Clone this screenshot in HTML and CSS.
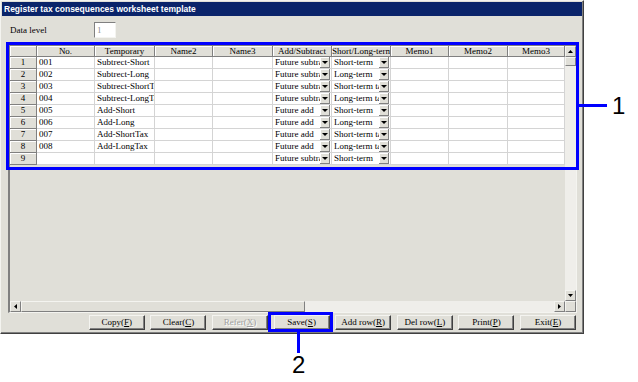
FILE: index.html
```html
<!DOCTYPE html>
<html lang="en">
<head>
    <meta charset="UTF-8">
    <title>Register tax consequences worksheet template</title>
    <link rel="stylesheet" href="styles.css">
</head>
<body>
    <div class="window">
        <div class="titlebar">Register tax consequences worksheet template</div>
        <div class="level-row">
            <span class="level-label">Data level</span>
            <div class="level-box">1</div>
        </div>
        <div class="grid-frame">
            <div class="grid-view">
                <div class="grid">
                    <div class="hcell"></div>
                    <div class="hcell">No.</div>
                    <div class="hcell">Temporary</div>
                    <div class="hcell">Name2</div>
                    <div class="hcell">Name3</div>
                    <div class="hcell">Add/Subtract</div>
                    <div class="hcell">Short/Long-term</div>
                    <div class="hcell">Memo1</div>
                    <div class="hcell">Memo2</div>
                    <div class="hcell">Memo3</div>

                    <div class="rcell">1</div><div class="cell">001</div><div class="cell">Subtrect-Short</div><div class="cell"></div><div class="cell"></div>
                    <div class="cell combo"><span>Future subtract</span><i class="drop"></i></div><div class="cell combo"><span>Short-term</span><i class="drop"></i></div>
                    <div class="cell"></div><div class="cell"></div><div class="cell"></div>

                    <div class="rcell">2</div><div class="cell">002</div><div class="cell">Subtrect-Long</div><div class="cell"></div><div class="cell"></div>
                    <div class="cell combo"><span>Future subtract</span><i class="drop"></i></div><div class="cell combo"><span>Long-term</span><i class="drop"></i></div>
                    <div class="cell"></div><div class="cell"></div><div class="cell"></div>

                    <div class="rcell">3</div><div class="cell">003</div><div class="cell">Subtrect-ShortTax</div><div class="cell"></div><div class="cell"></div>
                    <div class="cell combo"><span>Future subtract</span><i class="drop"></i></div><div class="cell combo"><span>Short-term tax</span><i class="drop"></i></div>
                    <div class="cell"></div><div class="cell"></div><div class="cell"></div>

                    <div class="rcell">4</div><div class="cell">004</div><div class="cell">Subtrect-LongTax</div><div class="cell"></div><div class="cell"></div>
                    <div class="cell combo"><span>Future subtract</span><i class="drop"></i></div><div class="cell combo"><span>Long-term tax</span><i class="drop"></i></div>
                    <div class="cell"></div><div class="cell"></div><div class="cell"></div>

                    <div class="rcell">5</div><div class="cell">005</div><div class="cell">Add-Short</div><div class="cell"></div><div class="cell"></div>
                    <div class="cell combo"><span>Future add</span><i class="drop"></i></div><div class="cell combo"><span>Short-term</span><i class="drop"></i></div>
                    <div class="cell"></div><div class="cell"></div><div class="cell"></div>

                    <div class="rcell">6</div><div class="cell">006</div><div class="cell">Add-Long</div><div class="cell"></div><div class="cell"></div>
                    <div class="cell combo"><span>Future add</span><i class="drop"></i></div><div class="cell combo"><span>Long-term</span><i class="drop"></i></div>
                    <div class="cell"></div><div class="cell"></div><div class="cell"></div>

                    <div class="rcell">7</div><div class="cell">007</div><div class="cell">Add-ShortTax</div><div class="cell"></div><div class="cell"></div>
                    <div class="cell combo"><span>Future add</span><i class="drop"></i></div><div class="cell combo"><span>Short-term tax</span><i class="drop"></i></div>
                    <div class="cell"></div><div class="cell"></div><div class="cell"></div>

                    <div class="rcell">8</div><div class="cell">008</div><div class="cell">Add-LongTax</div><div class="cell"></div><div class="cell"></div>
                    <div class="cell combo"><span>Future add</span><i class="drop"></i></div><div class="cell combo"><span>Long-term tax</span><i class="drop"></i></div>
                    <div class="cell"></div><div class="cell"></div><div class="cell"></div>

                    <div class="rcell">9</div><div class="cell"></div><div class="cell"></div><div class="cell"></div><div class="cell"></div>
                    <div class="cell combo"><span>Future subtract</span><i class="drop"></i></div><div class="cell combo"><span>Short-term</span><i class="drop"></i></div>
                    <div class="cell"></div><div class="cell"></div><div class="cell"></div>
                </div>
            </div>
            <div class="vscroll">
                <div class="sbtn"><svg width="5" height="3" viewBox="0 0 5 3"><polygon points="2.5,0 5,3 0,3" fill="#000"/></svg></div>
                <div class="vthumb"></div>
                <div class="vtrack"></div>
                <div class="sbtn"><svg width="5" height="3" viewBox="0 0 5 3"><polygon points="0,0 5,0 2.5,3" fill="#000"/></svg></div>
            </div>
            <div class="hscroll">
                <div class="sbtn"><svg width="3" height="5" viewBox="0 0 3 5"><polygon points="3,0 3,5 0,2.5" fill="#000"/></svg></div>
                <div class="hthumb"></div>
                <div class="htrack"></div>
                <div class="sbtn"><svg width="3" height="5" viewBox="0 0 3 5"><polygon points="0,0 3,2.5 0,5" fill="#000"/></svg></div>
            </div>
            <div class="corner"></div>
        </div>
        <div class="buttons">
            <div class="btn">Copy(<u>F</u>)</div>
            <div class="btn">Clear(<u>C</u>)</div>
            <div class="btn disabled">Refer(<u>X</u>)</div>
            <div class="btn">Save(<u>S</u>)</div>
            <div class="btn">Add row(<u>R</u>)</div>
            <div class="btn">Del row(<u>L</u>)</div>
            <div class="btn">Print(<u>P</u>)</div>
            <div class="btn">Exit(<u>E</u>)</div>
        </div>
    </div>

    <!-- callouts drawn over the screenshot -->
    <div class="mark mark-grid"></div>
    <div class="mark mark-save"></div>
    <div class="lead lead-1"></div>
    <div class="lead lead-2"></div>
    <div class="callout callout-1">1</div>
    <div class="callout callout-2">2</div>
</body>
</html>
```

FILE: styles.css
```css
body {
    margin: 0;
    background-color: #fff;
    font-family: "Liberation Serif", serif;
    font-size: 9px;
    color: #000;
}
.window {
    position: relative;
    width: 584px;
    height: 334px;
    box-sizing: border-box;
    background-color: #e0dfd8;
    border: 1px solid;
    border-color: #f4f4f0 #404040 #404040 #f4f4f0;
    box-shadow: inset -1px -1px #808080;
}
.titlebar {
    margin: 1px 1px 0 1px;
    height: 14px;
    line-height: 14px;
    padding-left: 2px;
    background-color: #0a246a;
    color: #fff;
    font-family: "Liberation Sans", sans-serif;
    font-weight: bold;
    font-size: 8.5px;
}
.level-row {
    display: flex;
    align-items: center;
    height: 28px;
    padding-left: 9px;
}
.level-label {
    width: 84px;
}
.level-box {
    width: 22px;
    height: 16px;
    box-sizing: border-box;
    background-color: #fff;
    border: 1px solid;
    border-color: #808080 #f4f4f0 #f4f4f0 #808080;
    color: #909090;
    padding-left: 2px;
    line-height: 14px;
}
.grid-frame {
    margin-left: 7px;
    width: 569px;
    height: 269px;
    box-sizing: border-box;
    border-style: solid;
    border-width: 2px 1px 1px 2px;
    border-color: #808080 #f4f4f0 #f4f4f0 #808080;
    display: grid;
    grid-template-columns: 555px 11px;
    grid-template-rows: 255px 11px;
}
.grid-view {
    background-color: #e0dfd8;
    overflow: hidden;
}
.grid {
    display: grid;
    grid-template-columns: 27px 58px 60px 58px 60px 59px 59px 58px 59px 57px;
    grid-template-rows: 11px;
    grid-auto-rows: 12px;
}
.hcell, .rcell {
    box-sizing: border-box;
    background-color: #e0dfd8;
    border-right: 1px solid #808080;
    border-bottom: 1px solid #808080;
    box-shadow: inset 1px 1px #fff;
    text-align: center;
    line-height: 11px;
    white-space: nowrap;
    overflow: hidden;
}
.hcell {
    line-height: 10px;
}
.cell {
    box-sizing: border-box;
    background-color: #fff;
    border-right: 1px solid #d4d4d4;
    border-bottom: 1px solid #d4d4d4;
    padding-left: 2px;
    line-height: 11px;
    white-space: nowrap;
    overflow: hidden;
}
.combo {
    display: flex;
    padding-right: 1px;
}
.combo span {
    flex: 1;
    overflow: hidden;
}
.drop {
    width: 10px;
    height: 11px;
    box-sizing: border-box;
    flex-shrink: 0;
    background-color: #e0dfd8;
    border-right: 1px solid #808080;
    border-bottom: 1px solid #808080;
    box-shadow: inset 1px 1px #fff;
    display: flex;
    align-items: center;
    justify-content: center;
}
.drop::after {
    content: "";
    border-left: 3px solid transparent;
    border-right: 3px solid transparent;
    border-top: 3px solid #000;
}
.vscroll {
    display: flex;
    flex-direction: column;
    background-color: #efeeea;
}
.hscroll {
    display: flex;
    background-color: #efeeea;
}
.sbtn, .vthumb, .hthumb, .corner {
    box-sizing: border-box;
    background-color: #e0dfd8;
    border: 1px solid;
    border-color: #f4f4f0 #808080 #808080 #f4f4f0;
}
.sbtn {
    width: 11px;
    height: 11px;
    flex-shrink: 0;
    display: flex;
    align-items: center;
    justify-content: center;
}
.vthumb {
    height: 9px;
}
.vtrack, .htrack {
    flex: 1;
}
.hthumb {
    width: 284px;
}
.buttons {
    display: flex;
    justify-content: flex-end;
    gap: 5.6px;
    margin-top: 2px;
    padding-right: 7px;
}
.btn {
    width: 56px;
    height: 15px;
    box-sizing: border-box;
    border: 1px solid;
    border-color: #f4f4f0 #404040 #404040 #f4f4f0;
    box-shadow: inset -1px -1px #808080;
    text-align: center;
    line-height: 13px;
    white-space: nowrap;
}
.btn.disabled {
    color: #a0a0a0;
    text-shadow: 1px 1px #fff;
}
.mark {
    position: absolute;
    border: 3px solid #0000ff;
    box-sizing: border-box;
}
.mark-grid {
    left: 6px;
    top: 42px;
    width: 573px;
    height: 128px;
}
.mark-save {
    left: 268px;
    top: 312px;
    width: 65px;
    height: 20px;
}
.lead {
    position: absolute;
    background-color: #0000ff;
}
.lead-1 {
    left: 579px;
    top: 104px;
    width: 28px;
    height: 3px;
}
.lead-2 {
    left: 297px;
    top: 332px;
    width: 3px;
    height: 21px;
}
.callout {
    position: absolute;
    font-family: "Liberation Sans", sans-serif;
    font-size: 24px;
    line-height: 24px;
    color: #000;
}
.callout-1 {
    left: 612px;
    top: 94px;
}
.callout-2 {
    left: 292px;
    top: 353px;
}
```
